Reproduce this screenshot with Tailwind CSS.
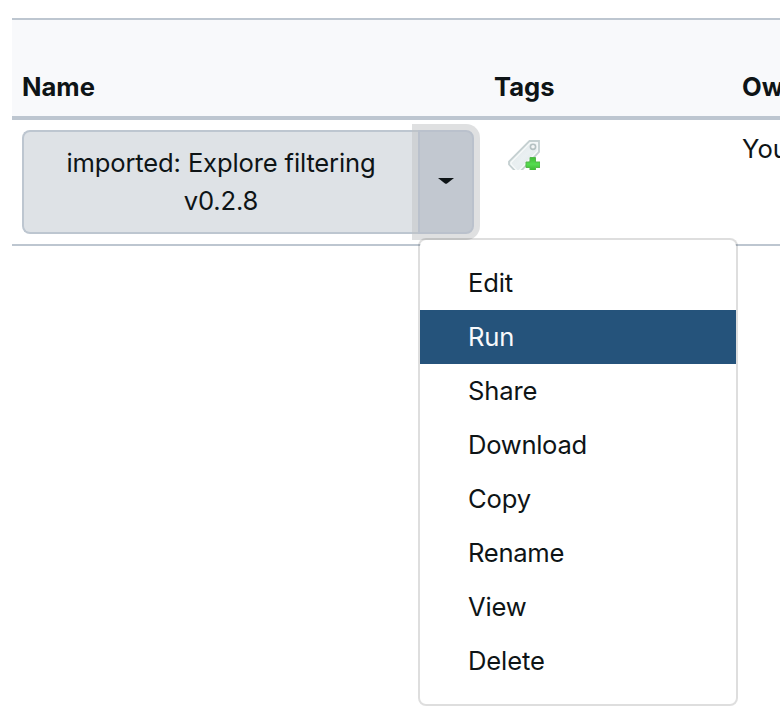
<!DOCTYPE html>
<html lang="en">
<head>
<meta charset="utf-8">
<title>Workflows</title>
<script src="https://cdn.jsdelivr.net/npm/@tailwindcss/browser@4"></script>
</head>
<body class="h-[722px] overflow-hidden bg-white font-['Inter',sans-serif] text-[25.6px] leading-[38px] text-[#0e1416]">
<main class="ml-3 mt-[18px] w-[768px]">
  <div class="grid h-[102px] grid-cols-[472px_248px_1fr] items-end overflow-hidden border-t-2 border-b-4 border-[#bdc6d0] bg-[#f8f9fb] pb-[10px] pl-[10px] font-bold">
    <div>Name</div>
    <div>Tags</div>
    <div>Owner</div>
  </div>
  <div class="grid h-[126px] grid-cols-[472px_248px_1fr] items-start border-b-2 border-[#bdc6d0] pl-[10px] pt-[10px]">
    <div class="relative flex h-[104px] w-[452px] tracking-[-0.15px]">
      <button class="flex-1 rounded-l-lg border-2 border-r-0 border-[#bdc6d0] bg-[#dee2e6] pb-px">imported: Explore filtering<br>v0.2.8</button>
      <button class="flex w-14 items-center justify-center rounded-r-lg border-2 border-[#bac1cc] bg-[#c2c8d0] pb-0.5 shadow-[0_0_0_6px_rgba(191,193,196,0.5)]" aria-label="Toggle menu">
        <svg width="16" height="6" viewBox="0 0 16 6"><path d="M0 0H16L9 5.5Q8 6 7 5.5Z" fill="#0e1416"/></svg>
      </button>
      <ul class="absolute left-[396px] top-[108px] z-10 h-[468px] w-80 rounded-lg border-2 border-black/13 bg-white bg-clip-padding py-4 leading-[54px]">
        <li class="h-[54px] pl-12">Edit</li>
        <li class="h-[54px] bg-[#25537b] pl-12 text-[#f8f9fb]">Run</li>
        <li class="h-[54px] pl-12">Share</li>
        <li class="h-[54px] pl-12 tracking-[-0.3px]">Download</li>
        <li class="h-[54px] pl-12">Copy</li>
        <li class="h-[54px] pl-12 tracking-[-0.3px]">Rename</li>
        <li class="h-[54px] pl-12">View</li>
        <li class="h-[54px] pl-12">Delete</li>
      </ul>
    </div>
    <div class="pl-[14px] pt-[10px]">
      <svg width="32" height="30" viewBox="0 0 32 30">
        <defs>
          <linearGradient id="tag" x1="0" y1="0" x2="1" y2="1"><stop offset="0" stop-color="#dce4e4"/><stop offset=".5" stop-color="#eaf0f2"/><stop offset="1" stop-color="#d5dfdf"/></linearGradient>
          <linearGradient id="plus" x1="0" y1="0" x2="0" y2="1"><stop offset="0" stop-color="#3fbf35"/><stop offset=".5" stop-color="#55dc50"/><stop offset="1" stop-color="#38b52e"/></linearGradient>
        </defs>
        <path d="M21.500 1H31V12L10 34L1 24.500V21.500Z" fill="url(#tag)" stroke="#c5d0d1" stroke-width="1.800"/>
        <path d="M22.200 2.800H29.200V11.200L10 31.500L3 24V22.500Z" fill="none" stroke="#f7fafa" stroke-width="1.200"/>
        <circle cx="25" cy="6.800" r="2.600" fill="#f3f6f6" stroke="#b5c1c2" stroke-width="1.600"/>
        <path d="M22 17.500H27.500V22H32V27.500H27.500V31H22V27.500H18V22H22Z" fill="url(#plus)" stroke="#55b74c" stroke-width="1" stroke-linejoin="round"/>
      </svg>
    </div>
    <div>You</div>
  </div>
</main>
</body>
</html>
